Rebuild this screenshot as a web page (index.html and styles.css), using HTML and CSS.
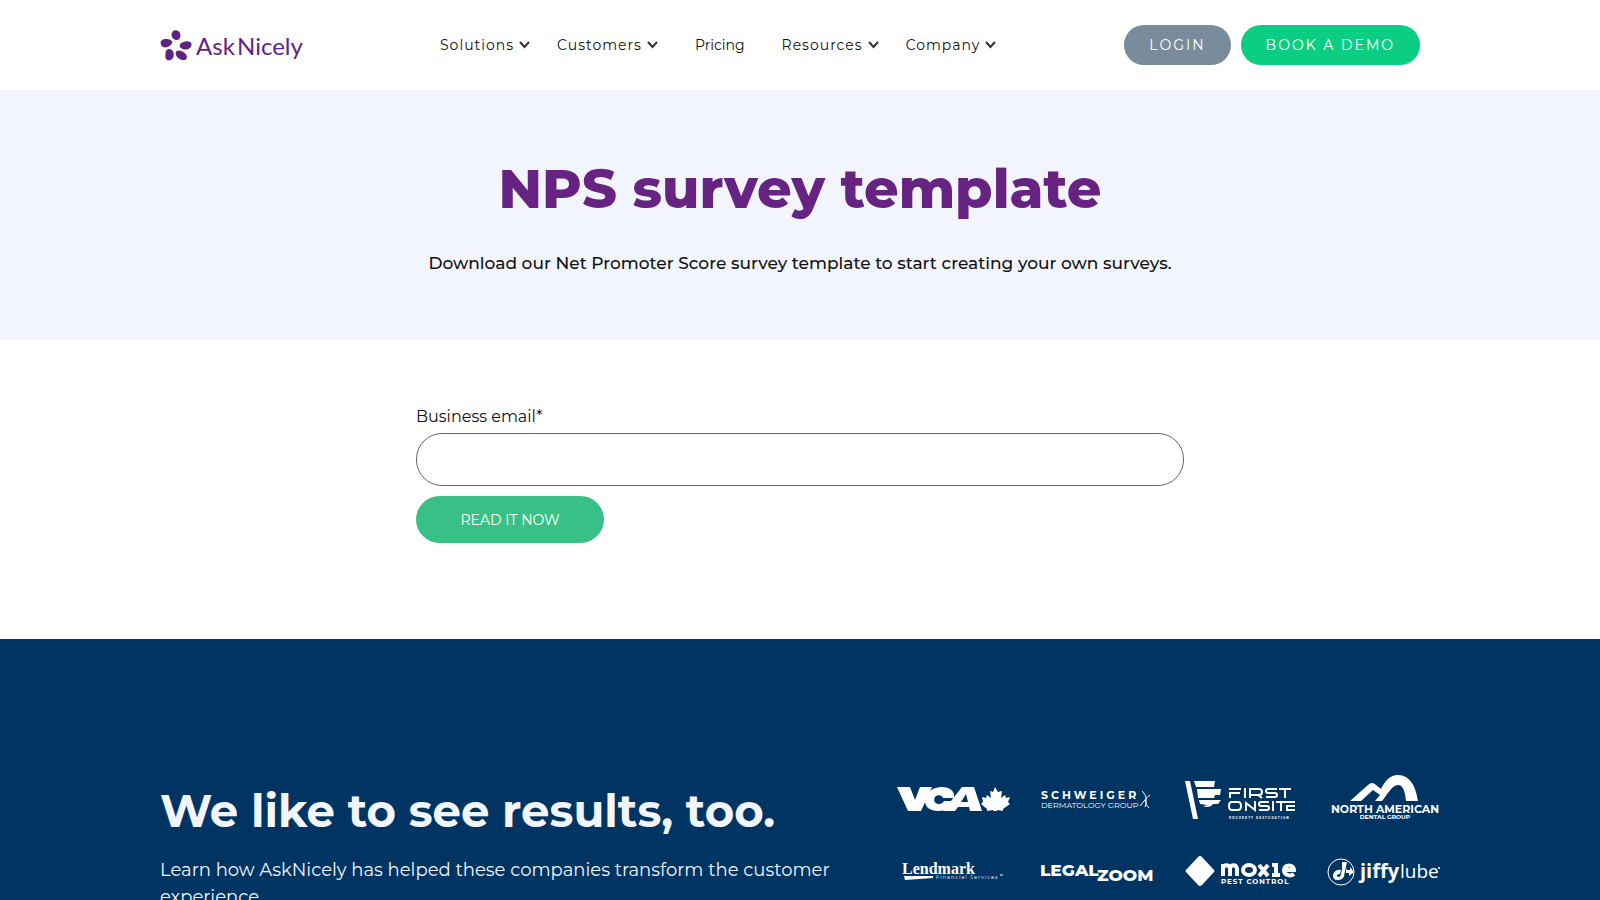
FILE: index.html
```html
<!DOCTYPE html>
<html lang="en">
    <head>
        <meta charset="UTF-8">
        <meta name="viewport" content="width=device-width, initial-scale=1">
        <title>NPS survey template | AskNicely</title>
        <link rel="stylesheet" href="styles.css">
    </head>
    <body>
        <header class="header">
            <a class="logo" href="#" aria-label="AskNicely">
                <svg width="144" height="34" viewBox="0 0 144 34">
                    <g class="petals">
                        <path d="M11.500 7c0-3.500 2-5 4.500-4.800 3.200.300 4.500 2.800 4.400 5.600-.1 2.700-1.600 4.200-3.300 4.200-2.600 0-5.600-2-5.600-5z"/>
                        <path d="M.600 14.600c0-2.800 2.700-3.900 6-3.600 3.300.200 5.600 1.400 5.700 3.200.1 2-3.500 4.800-6.800 5.300-3 .400-4.900-2.100-4.900-4.900z"/>
                        <path d="M19.700 17.500c.2-2 2.200-3.500 5.800-4 3.200-.5 5.600.300 6 2.400.5 2.600-2 5-4.700 5.600-3.400.700-7.300-1.800-7.100-4z"/>
                        <path d="M6.500 22c2-2 6-1 7 2.500.8 3.400-.3 6.500-2.900 7.500-2.700 1-5.300-.5-5.300-3.600 0-2 .2-5.200 1.200-6.400z"/>
                        <path d="M15.700 24.500c.4-2 3-2.600 5.700-1.500 3.300 1.300 5.800 3.800 5.500 6.400-.3 2.500-3 3.300-5.700 2.300-3.300-1.200-6-4.400-5.500-7.200z"/>
                    </g>
                    <text class="logo-text" x="36" y="27">Ask</text>
                    <text class="logo-text" x="77" y="27">Nicely</text>
                </svg>
            </a>
            <nav class="nav">
                <a href="#">Solutions<svg class="arrow" viewBox="0 0 11 8"><path d="M1 1l4.500 5 4.500-5"/></svg></a>
                <a href="#">Customers<svg class="arrow" viewBox="0 0 11 8"><path d="M1 1l4.500 5 4.500-5"/></svg></a>
                <a class="plain" href="#">Pricing</a>
                <a href="#">Resources<svg class="arrow" viewBox="0 0 11 8"><path d="M1 1l4.500 5 4.500-5"/></svg></a>
                <a href="#">Company<svg class="arrow" viewBox="0 0 11 8"><path d="M1 1l4.500 5 4.500-5"/></svg></a>
            </nav>
            <div class="actions">
                <a class="btn login" href="#">LOGIN</a>
                <a class="btn demo" href="#">BOOK A DEMO</a>
            </div>
        </header>

        <section class="hero">
            <h1>NPS survey template</h1>
            <p>Download our Net Promoter Score survey template to start creating your own surveys.</p>
        </section>

        <section class="download">
            <form class="form">
                <label for="email">Business email*</label>
                <input id="email" type="email" name="email" required>
                <button type="submit">READ IT NOW</button>
            </form>
        </section>

        <section class="results">
            <div class="results-text">
                <h2>We like to see results, too.</h2>
                <p>Learn how AskNicely has helped these companies transform the customer experience.</p>
            </div>
            <div class="brands">
                <!-- VCA -->
                <svg viewBox="0 0 112 56">
                    <path d="M0 16h13l5 13 5-13h12L24 40H11z"/>
                    <path d="M57 27H46c0-3-6-4-8-1-2 4 0 7 4 7 2 0 4-1 5-3h11c-2 7-8 10-17 10-9 0-14-5-13-12s8-12 17-12c8 0 13 4 12 11z"/>
                    <path fill-rule="evenodd" d="M65 16h12l8 24H73l-1-4H61l-3 4H46zm4 7l-5 8h7z"/>
                    <path d="M98 16l3 5 4-1-1 7 4-3 1 3 4-1-2 5 2 2-7 5v2l-6-1v1h-4v-1l-6 1v-2l-6-5 2-2-1-5 4 1 1-3 4 3-1-7 3 1z"/>
                </svg>
                <!-- Schweiger -->
                <svg viewBox="0 0 112 56">
                    <text class="sch-top" x="0" y="28">SCHWEIGER</text>
                    <text class="sch-sub" x="0" y="37">DERMATOLOGY GROUP</text>
                    <path class="line" d="M101 20c5 5 5 10 3 16M109 24c-4 2-6 7-10 11M104 29c1 4 2 6 4 8"/>
                </svg>
                <!-- First Onsite -->
                <svg viewBox="0 0 112 56">
                    <path d="M0 10h5l8 38H8zM9 10h21l-1 6H11zM12 18h24l-1 6H30l-1 3H13zM14 29h22l-3 4H28c-2 3-6 4-10 2l5-1-8-1z"/>
                    <g class="line thick">
                        <path d="M45 27v-5h10M44 18h12M60 17v10M65 27V18h9q3 0 3 3t-3 3h-9M73 24l4 3M92 18h-9q-2 0-2 2t2 2h7q2 0 2 2t-2 2h-9M94 18h12M100 18v9"/>
                        <path d="M47 31h6q3 0 3 4t-3 4h-6q-3 0-3-4t3-4zM61 40v-8l9 7v-9M84 31h-8q-2 0-2 2t2 2h6q2 0 2 2t-2 2h-8M88 30v10M91 31h19M96 31v9M110 35h-8v4h8"/>
                    </g>
                    <text class="fo-sub" x="44" y="48">PROPERTY RESTORATION</text>
                </svg>
                <!-- North American -->
                <svg viewBox="0 0 112 56">
                    <path d="M21 30L39 14q4-4 8 0l5 4C56 10 61 4 69 4c12 0 18 12 20 26H77c-1-10-3-16-8-16-6 0-10 9-16 16h-7l5-6-7-5-12 11z"/>
                    <text class="na-top" x="56" y="42">NORTH AMERICAN</text>
                    <text class="na-sub" x="56" y="48">DENTAL GROUP</text>
                </svg>
                <!-- Lendmark -->
                <svg viewBox="0 0 112 56">
                    <text class="len-top" x="5" y="29">Lendmark</text>
                    <path d="M7 31h29v2l-28 2z"/>
                    <text class="len-sub" x="39" y="34">Financial Services</text>
                    <path class="line" d="M103 30h3"/>
                </svg>
                <!-- LegalZoom -->
                <svg viewBox="0 0 112 56">
                    <text class="lz" x="-1" y="31">LEGAL</text>
                    <text class="lz" x="56" y="36">ZOOM</text>
                </svg>
                <!-- Moxie -->
                <svg viewBox="0 0 112 56">
                    <path d="M15 11q1 0 2 1l12 13q1 1 0 2L17 40q-2 2-4 0L1 27q-1-1 0-2l12-13q1-1 2-1z"/>
                    <g class="line heavy">
                        <path d="M38 31V19M38 24c0-5 7-5 7 0v7M45 24c0-5 7-5 7 0v7M74 20l9 11M83 20l-9 11M87 20h4v9M87 30h8M109 29c-4 3-10 1-10-4 0-6 10-6 10 0h-9"/>
                        <ellipse cx="64" cy="25" rx="6" ry="5"/>
                    </g>
                    <text class="mox-sub" x="36" y="39">PEST CONTROL</text>
                </svg>
                <!-- Jiffy Lube -->
                <svg viewBox="0 0 112 56">
                    <circle class="line" cx="12" cy="27" r="13"/>
                    <path d="M13 17h5l-3 14c-1 5-11 6-11 0 0-4 4-7 8-6l-1 4c-4 0-4 3-1 3 2 0 2-4 3-7z"/>
                    <path d="M17 23l1 2h3v-3l4 5-5 4v-3h-3z"/>
                    <text class="jiffy" x="31" y="33">jiffy</text>
                    <text class="lube" x="71" y="33">lube</text>
                    <circle cx="110" cy="23" r="1"/>
                </svg>
            </div>
        </section>
    </body>
</html>
```

FILE: styles.css
```css
*{ margin:0; padding:0; box-sizing:border-box; }
body{
    font-family: Montserrat, Inter, sans-serif;
    font-size: 16px;
    color: #111;
    background: #fff;
}
a{
    color: inherit;
    text-decoration: none;
}

/* header */
.header{
    display: flex;
    align-items: center;
    height: 90px;
    padding: 0 180px 0 10%;
}
.logo svg{
    display: block;
}
.logo-text{
    font-family: Lato, sans-serif;
    font-size: 24px;
    fill: #5f2382;
}
.petals{
    fill: #5f2382;
}
.nav{
    display: flex;
    gap: 27px;
    margin-left: 136px;
    font-size: 14px;
    letter-spacing: 1px;
}
.nav a{
    display: flex;
    align-items: center;
    gap: 5px;
}
.nav .plain{
    padding: 0 10px;
    letter-spacing: 0;
}
.arrow{
    width: 11px;
    height: 8px;
    fill: none;
    stroke: #333;
    stroke-width: 2;
}
.actions{
    display: flex;
    gap: 10px;
    margin-left: auto;
}
.btn{
    height: 40px;
    padding: 0 25px;
    border-radius: 20px;
    line-height: 40px;
    font-size: 14px;
    letter-spacing: 2px;
    white-space: nowrap;
    color: #fff;
}
.login{ background: #788c9b; }
.demo{ background: #0bce83; }

/* hero */
.hero{
    padding: 64px 20px 63px;
    background: #f2f5fd;
    text-align: center;
}
.hero h1{
    line-height: 70px;
    font-size: 54px;
    font-weight: 800;
    color: #662382;
}
.hero p{
    margin-top: 25px;
    line-height: 28px;
    font-size: 17px;
    font-weight: 500;
}

/* form */
.download{
    padding: 65px 26% 96px;
}
.form label{
    display: block;
    line-height: 24px;
    margin-bottom: 4px;
}
.form input{
    display: block;
    width: 100%;
    height: 53px;
    padding: 0 20px;
    border: 1px solid #666;
    border-radius: 26px;
    background: #fff;
    font: inherit;
}
.form button{
    width: 188px;
    height: 47px;
    margin-top: 10px;
    border: 0;
    border-radius: 24px;
    background: #39c086;
    color: #fff;
    font-family: inherit;
    font-size: 14px;
    cursor: pointer;
}

/* results */
.results{
    display: flex;
    justify-content: space-between;
    padding: 132px 159px 96px 10%;
    background: #003462;
    color: #f2f5fd;
}
.results-text{
    width: 680px;
    padding-top: 12px;
}
.results h2{
    line-height: 56px;
    font-size: 45px;
    font-weight: 700;
}
.results p{
    margin-top: 18px;
    line-height: 27px;
    font-size: 18px;
}
.brands{
    display: grid;
    grid-template-columns: repeat(4, 112px);
    gap: 18px 32px;
    align-content: start;
}
.brands svg{
    display: block;
    width: 112px;
    height: 56px;
    fill: #fff;
    overflow: visible;
}
.brands .line{
    fill: none;
    stroke: #fff;
    stroke-width: 1;
}
.brands .thick{ stroke-width: 2; }
.brands .heavy{ stroke-width: 4; }
.sch-top{ font-size: 11px; font-weight: 700; letter-spacing: 3px; }
.sch-sub{ font-size: 8px; }
.fo-sub{ font-size: 3px; font-weight: 700; letter-spacing: 1px; }
.na-top{ font-size: 11px; font-weight: 700; text-anchor: middle; }
.na-sub{ font-size: 6px; font-weight: 700; text-anchor: middle; }
.len-top{ font-family: "Liberation Serif", serif; font-size: 16px; font-weight: 700; }
.len-sub{ font-size: 5px; letter-spacing: 1px; }
.lz{ font-size: 17px; font-weight: 800; }
.mox-sub{ font-size: 7px; font-weight: 700; letter-spacing: 1px; }
.jiffy{ font-family: "Open Sans", sans-serif; font-size: 20px; font-weight: 700; }
.lube{ font-family: "Open Sans", sans-serif; font-size: 19px; font-weight: 400; }
```
